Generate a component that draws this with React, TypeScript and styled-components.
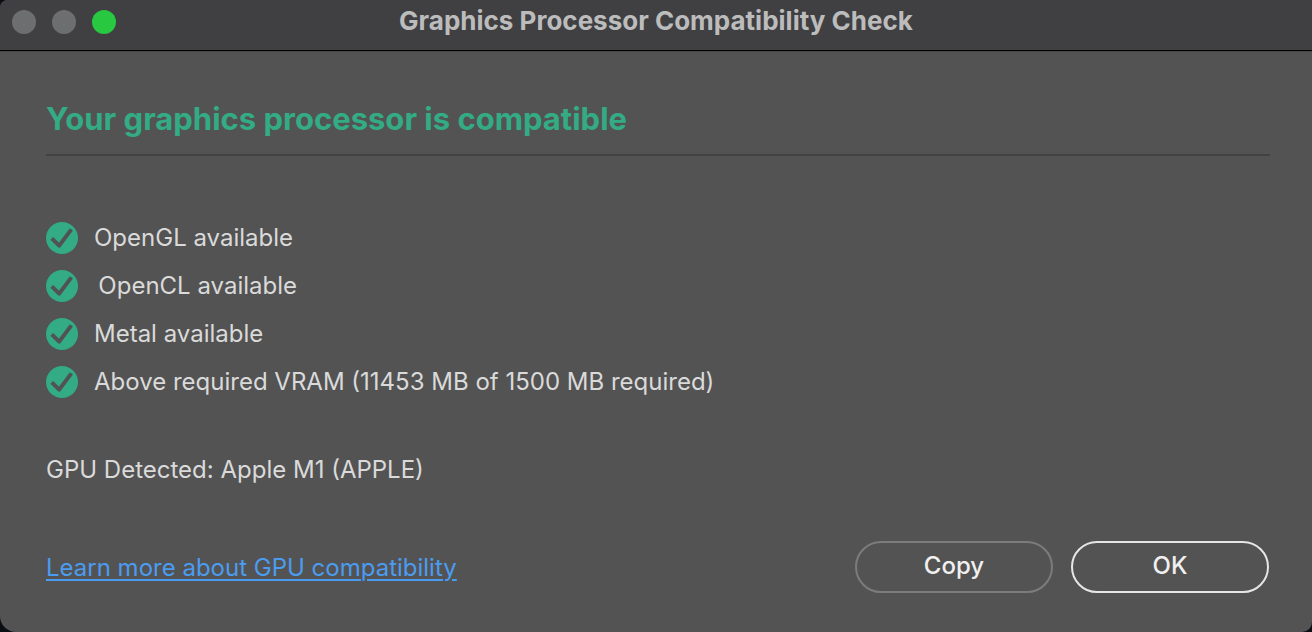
import React from "react";
import styled, { createGlobalStyle } from "styled-components";

const Global = createGlobalStyle`
  * { box-sizing: border-box; }
  body {
    margin: 0;
    background: #0b0f14;
    color: #dadada;
    font-family: Inter, "Liberation Sans", sans-serif;
    font-size: 24px;
    line-height: 32px;
  }
`;

const Dialog = styled.main`
  min-height: 100vh;
  display: flex;
  flex-direction: column;
  background: #535353;
  border-radius: 8px 0 10px 16px;
  overflow: hidden;
`;

const TitleBar = styled.header`
  display: grid;
  grid-template-columns: 1fr auto 1fr;
  align-items: center;
  height: 51px;
  padding: 0 12px 8px;
  background: #404042;
  border-bottom: 1px solid #000;
`;

const Lights = styled.div`
  display: flex;
  gap: 16px;
  padding-top: 2px;
`;

const Light = styled.button<{ $color: string }>`
  width: 24px;
  height: 24px;
  padding: 0;
  border: 0;
  border-radius: 50%;
  background: ${(p) => p.$color};
`;

const Title = styled.h1`
  margin: 0;
  font-size: 26px;
  font-weight: 700;
  color: #bcbcbd;
`;

const Content = styled.div`
  flex: 1;
  display: flex;
  flex-direction: column;
  padding: 48px 42px 39px 46px;
  box-shadow: inset 0 1px 0 #484848;
`;

const Heading = styled.h2`
  margin: 0 0 66px;
  padding-bottom: 15px;
  border-bottom: 2px solid #424242;
  font-size: 31px;
  line-height: 40px;
  font-weight: 700;
  color: #33ab84;
`;

const Checks = styled.ul`
  display: flex;
  flex-direction: column;
  gap: 16px;
  margin: 0 0 56px;
  padding: 0;
  list-style: none;
`;

const Check = styled.li`
  display: flex;
  gap: 16px;
`;

const Detected = styled.p`
  margin: 0;
`;

const Footer = styled.footer`
  display: flex;
  align-items: center;
  justify-content: space-between;
  margin-top: auto;
  padding-right: 1px;
`;

const Link = styled.a`
  padding-top: 2px;
  color: #4b9cf0;
  text-decoration-thickness: 2px;
  text-underline-offset: 3px;
`;

const Actions = styled.div`
  display: flex;
  gap: 18px;
`;

const Button = styled.button<{ $primary?: boolean }>`
  width: 198px;
  height: 52px;
  padding: 0 0 2px;
  border: 2px solid ${(p) => (p.$primary ? "#e6e6e6" : "#7c7c7c")};
  border-radius: 26px;
  background: transparent;
  color: #f0f0f0;
  font: 500 24px/32px Inter, "Liberation Sans", sans-serif;
`;

const CheckIcon = () => (
  <svg width="32" height="32" viewBox="0 0 32 32" aria-hidden="true">
    <circle cx="16" cy="16" r="16" fill="#33ab84" />
    <path d="M5.8 16.4 L13.2 23.6 L25.4 7.4" fill="none" stroke="#4f5351" strokeWidth="4" strokeLinejoin="round" />
  </svg>
);

const checks = [
  "OpenGL available",
  "\u2009OpenCL available",
  "Metal available",
  "Above required VRAM (11453 MB of 1500 MB required)",
];

export default function App() {
  return (
    <>
      <Global />
      <Dialog>
        <TitleBar>
          <Lights>
            <Light $color="#6d6e70" aria-label="Close" />
            <Light $color="#6d6e70" aria-label="Minimize" />
            <Light $color="#28c840" aria-label="Zoom" />
          </Lights>
          <Title>Graphics Processor Compatibility Check</Title>
        </TitleBar>
        <Content>
          <Heading>Your graphics processor is compatible</Heading>
          <Checks>
            {checks.map((text) => (
              <Check key={text}>
                <CheckIcon />
                {text}
              </Check>
            ))}
          </Checks>
          <Detected>GPU Detected: Apple M1 (APPLE)</Detected>
          <Footer>
            <Link href="#gpu-compatibility">Learn more about GPU compatibility</Link>
            <Actions>
              <Button>Copy</Button>
              <Button $primary>OK</Button>
            </Actions>
          </Footer>
        </Content>
      </Dialog>
    </>
  );
}
